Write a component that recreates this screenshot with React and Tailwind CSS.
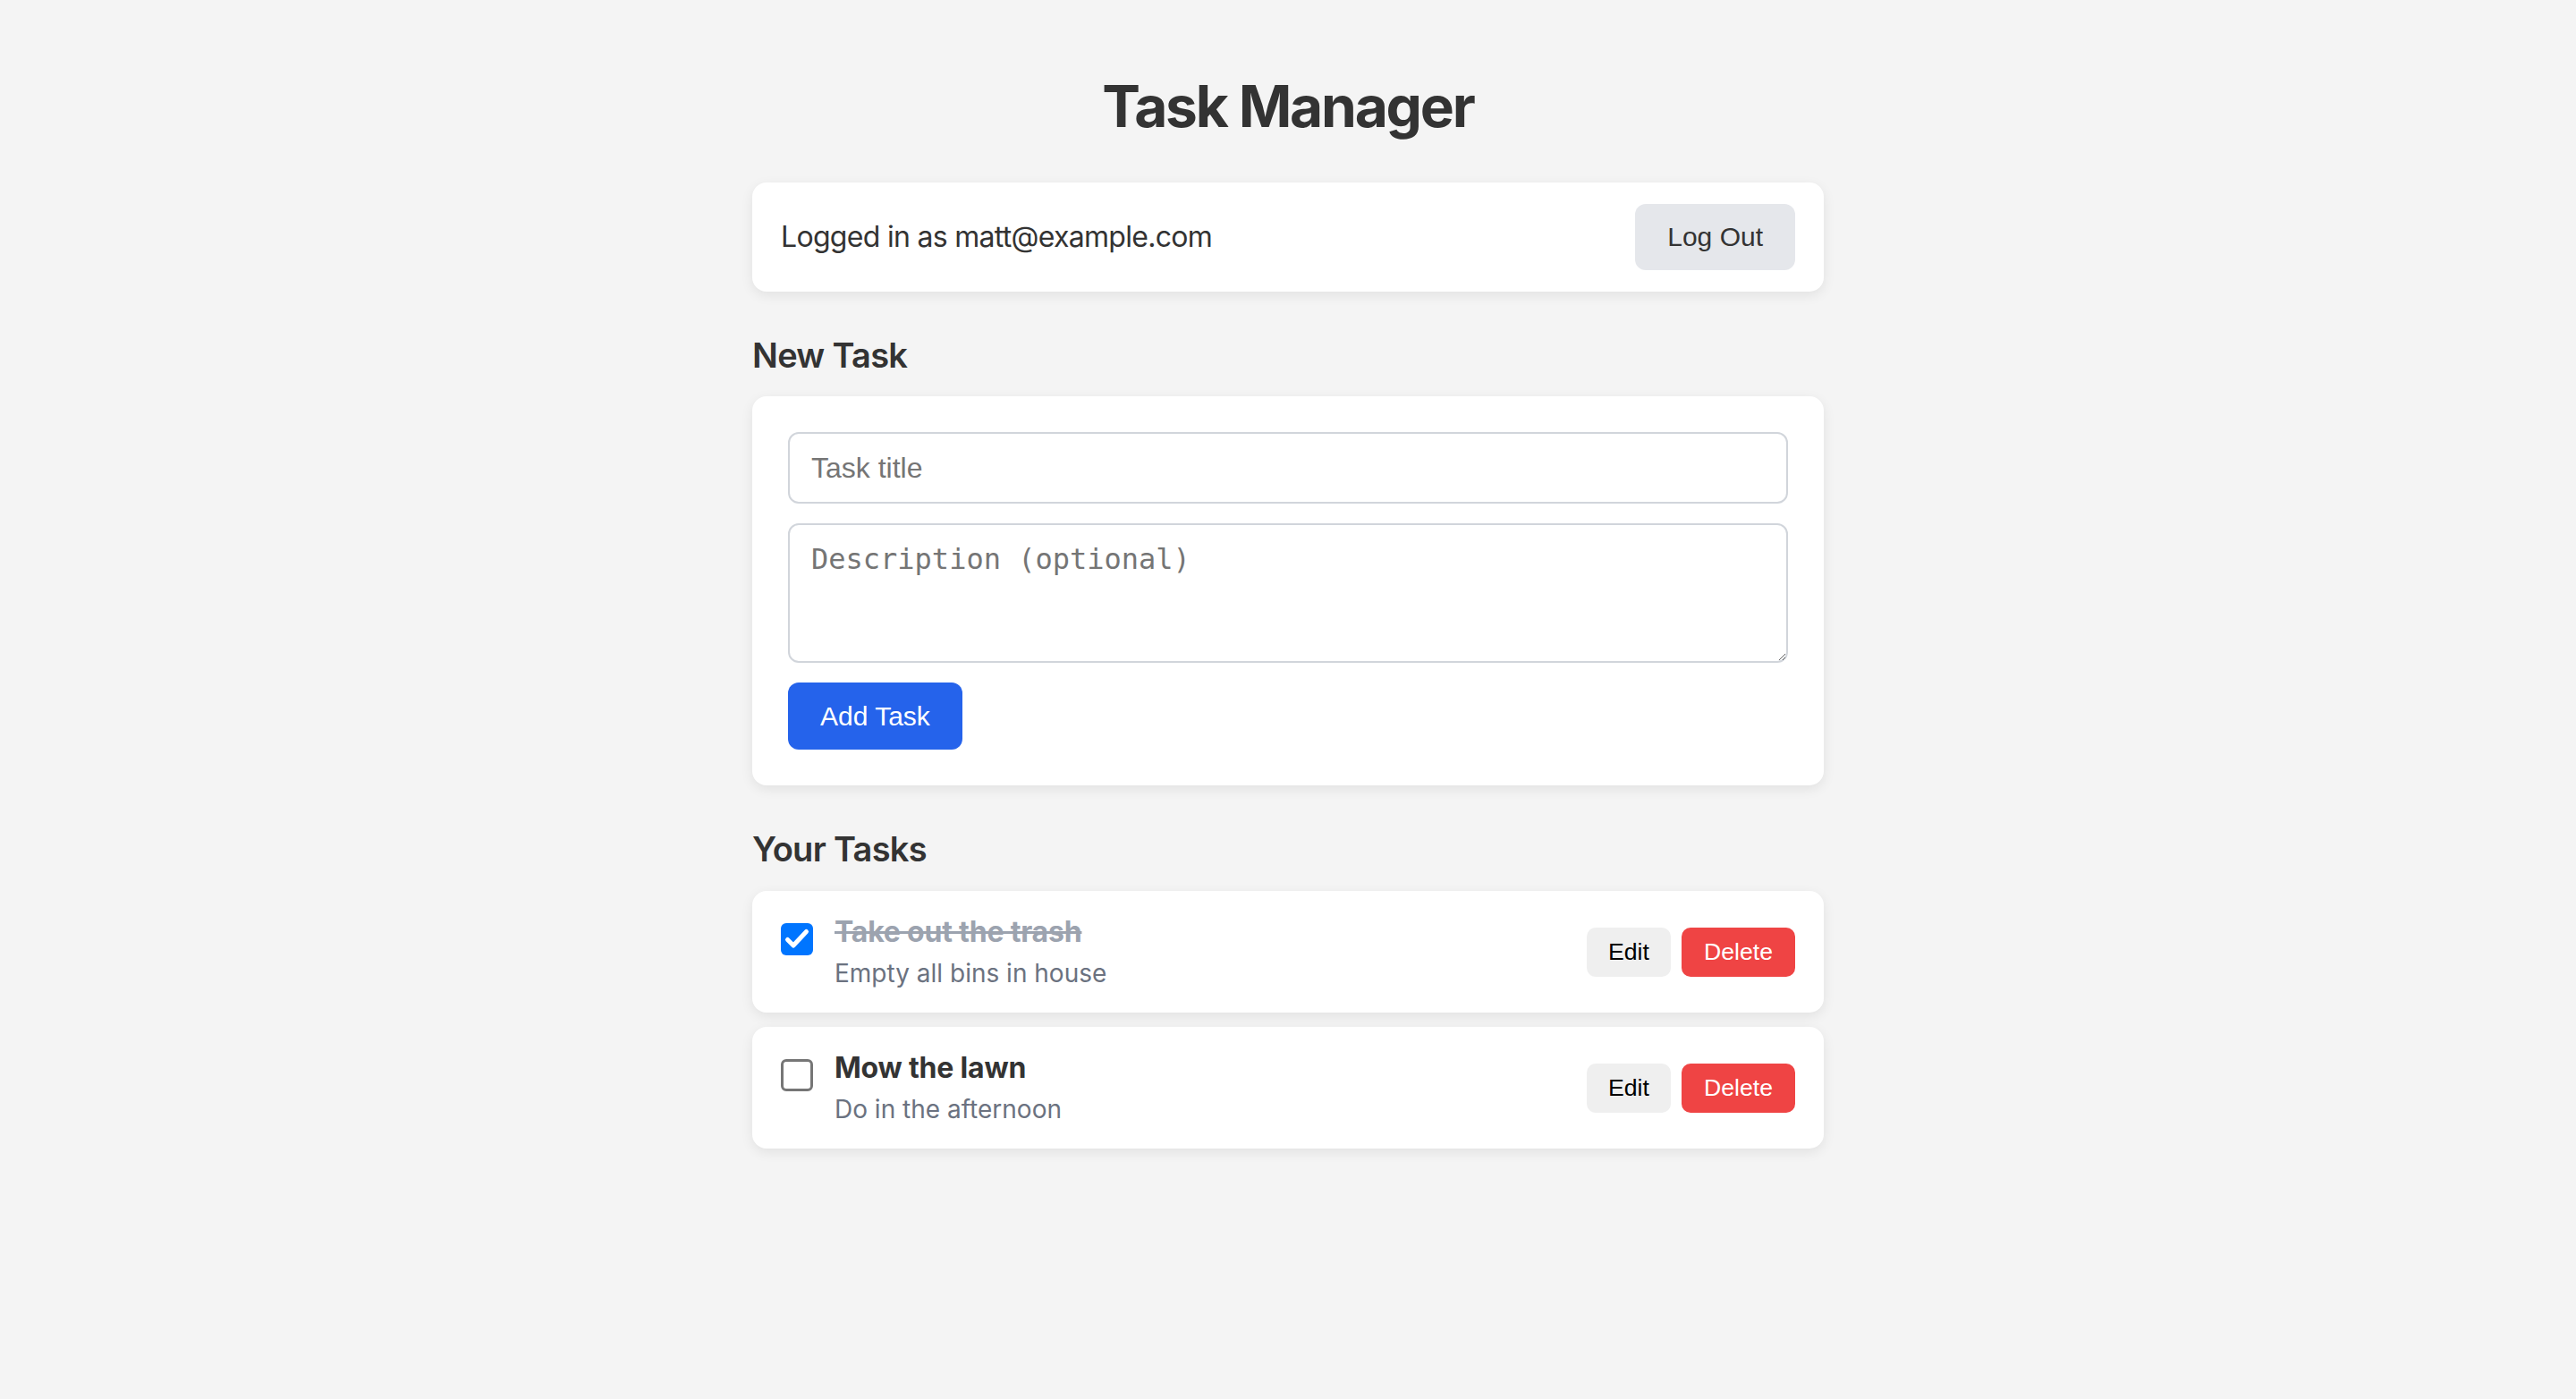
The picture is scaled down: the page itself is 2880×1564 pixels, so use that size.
import React, { useState } from "react";

const initialTasks = [
  { id: 1, title: "Take out the trash", description: "Empty all bins in house", done: true },
  { id: 2, title: "Mow the lawn", description: "Do in the afternoon", done: false },
];

function CheckBox({ checked, onChange }) {
  if (checked) {
    return (
      <button
        onClick={onChange}
        className="mt-[12px] flex h-[36px] w-[36px] shrink-0 items-center justify-center rounded-[6px] bg-[#0075ff]"
      >
        <svg width="36" height="36" viewBox="0 0 36 36">
          <path d="M7.5 18.5 L14 25 L28.5 9.5" fill="none" stroke="white" strokeWidth="5" strokeLinecap="round" strokeLinejoin="round" />
        </svg>
      </button>
    );
  }
  return (
    <button
      onClick={onChange}
      className="mt-[12px] h-[36px] w-[36px] shrink-0 rounded-[6px] border-[3px] border-[#767676] bg-white"
    />
  );
}

export default function App() {
  const [tasks, setTasks] = useState(initialTasks);

  const toggle = (id) =>
    setTasks((list) => list.map((t) => (t.id === id ? { ...t, done: !t.done } : t)));

  return (
    <div className="min-h-screen bg-[#f4f4f4] pb-[120px] pt-[80px] font-['Inter',sans-serif] text-[#333333]">
      <div className="mx-auto w-[1198px]">
        <h1 className="mb-[47px] text-center text-[64px] font-bold leading-[77px] tracking-[-2.2px]">Task Manager</h1>

        <section className="flex items-center justify-between rounded-[16px] bg-white px-[32px] py-[24px] shadow-[0_4px_14px_rgba(0,0,0,0.08)]">
          <p className="text-[32px] leading-[40px] tracking-[-0.7px]">Logged in as matt@example.com</p>
          <button className="rounded-[12px] bg-[#e5e7eb] px-[36px] py-[20px] font-['Liberation_Sans',Arial,sans-serif] text-[30px] leading-[34px] text-[#333333]">
            Log Out
          </button>
        </section>

        <h2 className="mb-[23px] mt-[48px] text-[38px] font-semibold leading-[46px] tracking-[-0.7px]">New Task</h2>
        <section className="flex flex-col items-start gap-[22px] rounded-[16px] bg-white p-[40px] shadow-[0_4px_14px_rgba(0,0,0,0.08)]">
          <input
            type="text"
            placeholder="Task title"
            className="h-[80px] w-full rounded-[12px] border-2 border-[#d1d5db] bg-white px-[24px] font-['Liberation_Sans',Arial,sans-serif] text-[32px] text-[#333333] outline-none placeholder:text-[#757575]"
          />
          <textarea
            placeholder="Description (optional)"
            className="block h-[156px] w-full rounded-[12px] border-2 border-[#d1d5db] bg-white px-[24px] py-[20px] font-['DejaVu_Sans_Mono',monospace] text-[32px] leading-[37px] text-[#333333] outline-none placeholder:text-[#757575]"
          />
          <button className="rounded-[12px] bg-[#2563eb] px-[36px] py-[20px] font-['Liberation_Sans',Arial,sans-serif] text-[30px] leading-[35px] text-white">
            Add Task
          </button>
        </section>

        <h2 className="mb-[24px] mt-[48px] text-[38px] font-semibold leading-[46px] tracking-[-0.7px]">Your Tasks</h2>
        <div className="flex flex-col gap-[16px]">
          {tasks.map((task) => (
            <div
              key={task.id}
              className="flex items-center justify-between rounded-[16px] bg-white px-[32px] py-[24px] shadow-[0_4px_14px_rgba(0,0,0,0.08)]"
            >
              <div className="flex items-start gap-[24px]">
                <CheckBox checked={task.done} onChange={() => toggle(task.id)} />
                <div>
                  <p
                    className={
                      task.done
                        ? "text-[32px] font-bold leading-[44px] tracking-[-0.2px] text-[#9ca3af] line-through"
                        : "text-[32px] font-bold leading-[44px] tracking-[-0.2px] text-[#333333]"
                    }
                  >
                    {task.title}
                  </p>
                  <p className="mt-[4px] text-[28px] leading-[40px] text-[#6b7280]">{task.description}</p>
                </div>
              </div>
              <div className="flex items-center gap-[12px] font-['Liberation_Sans',Arial,sans-serif] text-[26.67px] leading-[31px]">
                <button className="rounded-[10px] bg-[#efefef] px-[24px] py-[12px] text-black">Edit</button>
                <button className="rounded-[10px] bg-[#ef4444] px-[25px] py-[12px] text-white">Delete</button>
              </div>
            </div>
          ))}
        </div>
      </div>
    </div>
  );
}
